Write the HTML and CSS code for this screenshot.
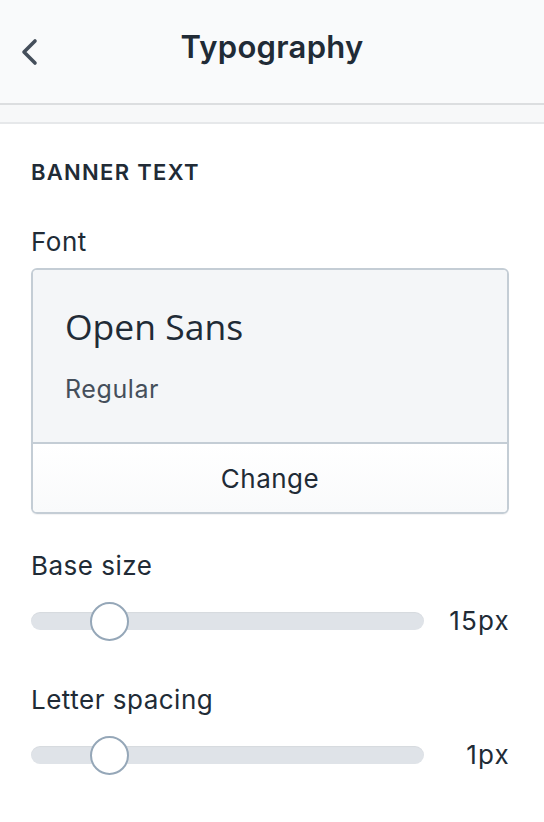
FILE: index.html
```html
<!DOCTYPE html>
<html>
<head>
<meta charset="utf-8">
<link rel="stylesheet" href="styles.css">
</head>
<body>
<header class="topbar">
  <button class="back" aria-label="Back">
    <svg width="18" height="28" viewBox="0 0 18 28"><path d="M15 3 L4 14 L15 25" fill="none" stroke="#454f5b" stroke-width="3.6" stroke-linecap="round" stroke-linejoin="round"/></svg>
  </button>
  <h1 class="title">Typography</h1>
  <span class="spacer"></span>
</header>
<div class="strip"></div>
<main class="content">
  <h2 class="section-title">BANNER TEXT</h2>
  <div class="label label-font">Font</div>
  <div class="font-card">
    <div class="font-preview">
      <div class="font-name">Open Sans</div>
      <div class="font-style">Regular</div>
    </div>
    <div class="font-change">Change</div>
  </div>
  <div class="label label-range">Base size</div>
  <div class="range-row">
    <div class="track"><span class="thumb"></span></div>
    <span class="value">15px</span>
  </div>
  <div class="label label-range2">Letter spacing</div>
  <div class="range-row">
    <div class="track"><span class="thumb"></span></div>
    <span class="value">1px</span>
  </div>
</main>
</body>
</html>
```
FILE: styles.css
```css
* { box-sizing: border-box; }
html, body { margin: 0; padding: 0; }
body {
  background: #ffffff;
  font-family: Inter, "Liberation Sans", sans-serif;
  color: #212b36;
  width: 544px;
  height: 822px;
  overflow: hidden;
}
.topbar {
  height: 105px;
  background: #f9fafb;
  border-bottom: 2px solid #dcdee0;
  display: grid;
  grid-template-columns: 60px 1fr 60px;
  align-items: center;
}
.back {
  border: 0;
  background: none;
  padding: 0 0 0 20px;
  margin: 0;
  display: flex;
  align-items: center;
  height: 30px;
}
.title {
  margin: 0;
  text-align: center;
  font-size: 31px;
  font-weight: 600;
  line-height: 40px;
  letter-spacing: 0.3px;
  color: #212b36;
  padding-bottom: 10px;
}
.strip {
  height: 19px;
  background: #f7f8f9;
  border-bottom: 2px solid #e6e8ea;
}
.content {
  padding: 0 35px 0 31px;
}
.section-title {
  margin: 34px 0 0;
  font-size: 22px;
  line-height: 28px;
  font-weight: 600;
  letter-spacing: 1.3px;
  color: #212b36;
}
.label {
  font-size: 26px;
  line-height: 36px;
  letter-spacing: 0.5px;
  color: #212b36;
}
.label-font { margin-top: 38px; }
.font-card {
  margin-top: 8px;
  border: 2px solid #c4cdd5;
  border-radius: 6px;
  overflow: hidden;
  box-shadow: 0 1px 1px rgba(22, 29, 37, 0.05);
}
.font-preview {
  background: #f4f6f8;
  padding: 32px 32px 37px;
  border-bottom: 2px solid #c4cdd5;
}
.font-name {
  font-family: "Open Sans", sans-serif;
  font-size: 35.5px;
  line-height: 48px;
  color: #212b36;
}
.font-style {
  margin-top: 23px;
  font-size: 25px;
  line-height: 32px;
  letter-spacing: 0.6px;
  color: #454f5b;
}
.font-change {
  height: 68px;
  display: flex;
  align-items: center;
  justify-content: center;
  font-size: 26px;
  letter-spacing: 0.5px;
  background: linear-gradient(#ffffff, #f9fafb);
  color: #212b36;
}
.label-range { margin-top: 34px; }
.label-range2 { margin-top: 41px; }
.range-row {
  margin-top: 17px;
  height: 40px;
  display: flex;
  align-items: center;
}
.track {
  position: relative;
  width: 393px;
  height: 18px;
  border-radius: 9px;
  background: #dfe3e8;
  box-shadow: inset 0 1px 1px rgba(0,0,0,0.04);
}
.thumb {
  position: absolute;
  left: 59px;
  top: 50%;
  width: 39px;
  height: 39px;
  margin-top: -19.5px;
  border-radius: 50%;
  background: #ffffff;
  border: 2px solid #95a7b8;
}
.value {
  flex: 1;
  text-align: right;
  font-size: 26px;
  line-height: 36px;
  letter-spacing: 1.2px;
  margin-right: -1px;
  color: #212b36;
}
```
